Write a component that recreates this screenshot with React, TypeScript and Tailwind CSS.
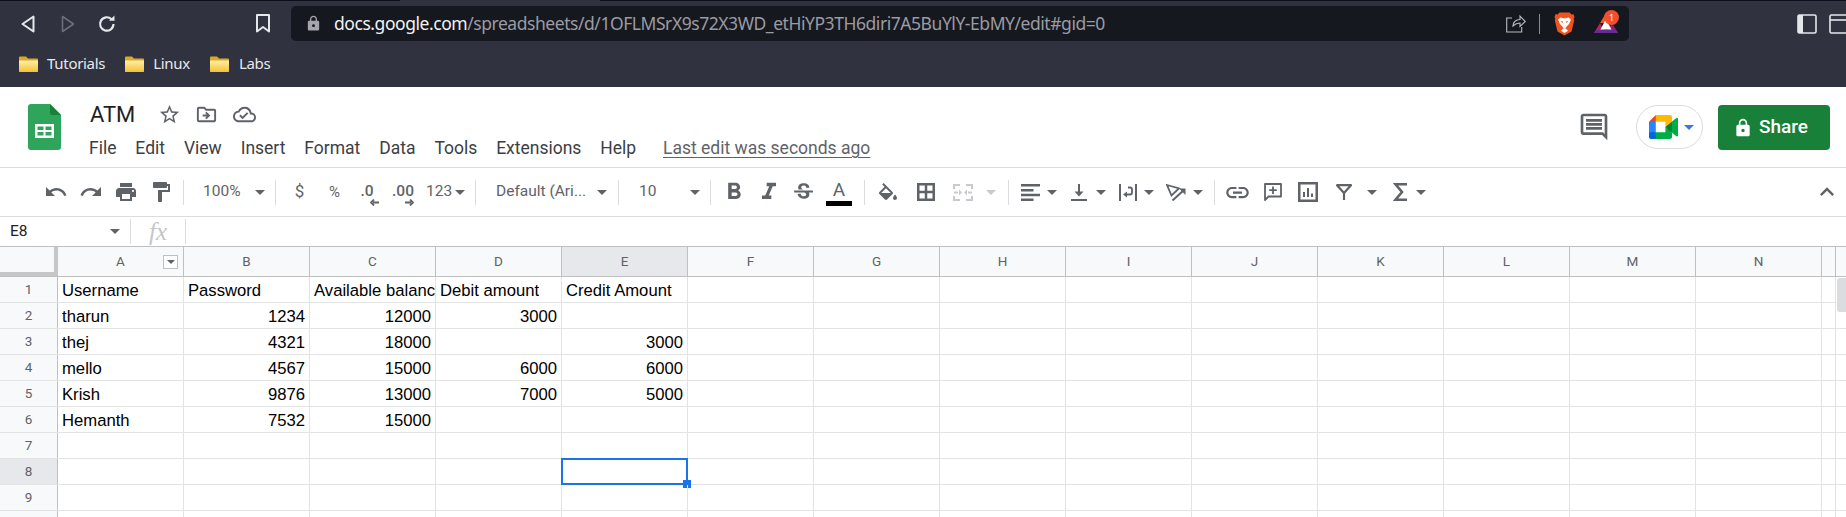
import React from "react";
import {
  MdExpandLess,
  MdFormatBold,
  MdFormatItalic,
  MdFormatPaint,
  MdLink,
  MdLock,
  MdOutlineCloudDone,
  MdOutlineComment,
  MdOutlineDriveFileMove,
  MdPrint,
  MdRedo,
  MdStarBorder,
  MdStrikethroughS,
  MdUndo,
} from "react-icons/md";

const COLUMNS = ["A", "B", "C", "D", "E", "F", "G", "H", "I", "J", "K", "L", "M", "N"];

const ROWS: string[][] = [
  ["Username", "Password", "Available balance", "Debit amount", "Credit Amount"],
  ["tharun", "1234", "12000", "3000", ""],
  ["thej", "4321", "18000", "", "3000"],
  ["mello", "4567", "15000", "6000", "6000"],
  ["Krish", "9876", "13000", "7000", "5000"],
  ["Hemanth", "7532", "15000", "", ""],
  ["", "", "", "", ""],
  ["", "", "", "", ""],
  ["", "", "", "", ""],
  ["", "", "", "", ""],
];

const MENU = ["File", "Edit", "View", "Insert", "Format", "Data", "Tools", "Extensions", "Help"];

const Caret = ({ className = "" }: { className?: string }) => (
  <svg width="10" height="5" viewBox="0 0 10 5" className={className}>
    <path d="M0 0h10L5 5z" fill="currentColor" />
  </svg>
);

const Sep = ({ className = "" }: { className?: string }) => (
  <div className={`h-[25px] w-px shrink-0 bg-[#dadce0] ${className}`} />
);

const Slot = ({ className = "w-[35px]", children }: { className?: string; children?: React.ReactNode }) => (
  <div className={`flex shrink-0 items-center justify-center ${className}`}>{children}</div>
);

const Folder = () => (
  <svg width="19" height="17" viewBox="0 0 19 17">
    <defs>
      <linearGradient id="folderFill" x1="0" y1="0" x2="0" y2="1">
        <stop offset="0" stopColor="#fff0a8" />
        <stop offset="1" stopColor="#f5c034" />
      </linearGradient>
    </defs>
    <path d="M1 1.5h6l2 2h9a1 1 0 0 1 1 1V16a1 1 0 0 1-1 1H1a1 1 0 0 1-1-1V2.5a1 1 0 0 1 1-1z" fill="#dba827" />
    <path d="M0 5.5h19V16a1 1 0 0 1-1 1H1a1 1 0 0 1-1-1z" fill="url(#folderFill)" />
  </svg>
);

const SheetsLogo = () => (
  <svg width="33" height="46" viewBox="0 0 33 46">
    <path d="M3 0h19l11 11v32a3 3 0 0 1-3 3H3a3 3 0 0 1-3-3V3a3 3 0 0 1 3-3z" fill="#2ea55a" />
    <path d="M22 0l11 11H24a2 2 0 0 1-2-2z" fill="#188038" />
    <path d="M7 20h19v14H7z" fill="#fff" />
    <path d="M9.5 22.5h6v3.5h-6zM17.5 22.5h6v3.5h-6zM9.5 28h6v3.5h-6zM17.5 28h6v3.5h-6z" fill="#2ea55a" />
  </svg>
);

const MeetLogo = () => (
  <svg width="29" height="24" viewBox="0 0 87.5 72">
    <path fill="#00832d" d="M49.5 36l8.53 9.75 11.47 7.33 2-17.02-2-16.64-11.69 6.44z" />
    <path fill="#0066da" d="M0 51.5V66c0 3.315 2.685 6 6 6h14.5l3-10.96-3-9.54-9.95-3z" />
    <path fill="#e94235" d="M20.5 0L0 20.5l10.55 3 9.95-3 2.95-9.41z" />
    <path fill="#2684fc" d="M20.5 20.5H0v31h20.5z" />
    <path
      fill="#00ac47"
      d="M82.6 8.68L69.5 19.42v33.66l13.16 10.79c1.97 1.54 4.85.135 4.85-2.37V11c0-2.535-2.945-3.925-4.91-2.32zM49.5 36v15.5h-29V72h43c3.315 0 6-2.685 6-6V53.08z"
    />
    <path fill="#ffba00" d="M63.5 0h-43v20.5h29V36l20-16.57V6c0-3.315-2.685-6-6-6z" />
  </svg>
);

const BraveLogo = () => (
  <svg width="21" height="24" viewBox="0 0 21 24">
    <path d="M5.500 0.500h10l2 2 2-.3 1 3-.8 1.300.5 1.800-2.700 11.200-7 4-7-4L.8 8.300l.5-1.800L.5 5.200l1-3 2 .3z" fill="#f1531f" />
    <path d="M10.500 21l-3.500-2.300 2.200-2.200h2.600l2.200 2.200z" fill="#fff" />
    <path d="M4 7.500l2.500-2 2.500.8h3l2.500-.8 2.500 2-2 4.500-2.500 2.800L10.500 17l-2-2.200L6 12z" fill="#fff" />
    <path d="M6.500 9l2.700.5-.7 1.500zM14.500 9l-2.700.5.7 1.500z" fill="#f1531f" />
  </svg>
);

const BatLogo = () => (
  <div className="relative h-[24px] w-[24px]">
    <svg width="24" height="20" viewBox="0 0 24 20" className="mt-[3px]">
      <path d="M12 0l6 10H6z" fill="#f05a24" />
      <path d="M6 10L0 20h12l-3-5z" fill="#b5245f" />
      <path d="M18 10l6 10H12l3-5z" fill="#8e1f73" />
      <path d="M0 20l2-3h20l2 3z" fill="#662d91" />
      <path d="M12 6l5.500 10.500h-11z" fill="#fff" />
    </svg>
    <div className="absolute -top-[3px] left-[10px] flex h-[15px] w-[15px] items-center justify-center rounded-full bg-[#f1502f] font-['Noto_Sans',sans-serif] text-[9px] leading-none text-white">
      1
    </div>
  </div>
);

const ChromeBar = () => (
  <div className="h-[87px] shrink-0 bg-[#30323f] font-['Noto_Sans',sans-serif]">
    <div className="flex h-px">
      <div className="w-[400px] bg-[#0c0e1c]" />
      <div className="w-[200px]" />
      <div className="flex-1 bg-[#0c0e1c]" />
    </div>
    <div className="flex h-[45px] items-center">
      <Slot className="ml-[12px] w-[32px] text-[#e6e7ea]">
        <svg width="14" height="18" viewBox="0 0 14 18">
          <path d="M12.500 1.500v15L1.500 9z" fill="none" stroke="currentColor" strokeWidth="2" strokeLinejoin="round" />
        </svg>
      </Slot>
      <Slot className="ml-[8px] w-[32px] text-[#6b6d78]">
        <svg width="14" height="18" viewBox="0 0 14 18">
          <path d="M1.500 1.500v15l11-7.500z" fill="none" stroke="currentColor" strokeWidth="1.600" strokeLinejoin="round" />
        </svg>
      </Slot>
      <Slot className="ml-[7px] w-[32px] text-[#e6e7ea]">
        <svg width="20" height="20" viewBox="0 0 20 20">
          <path d="M16.500 10a6.700 6.700 0 1 1-2-4.800" fill="none" stroke="currentColor" strokeWidth="2.200" />
          <path d="M12 6.800h5.500V1.500z" fill="currentColor" />
        </svg>
      </Slot>
      <Slot className="ml-[124px] w-[32px] text-[#e6e7ea]">
        <svg width="16" height="19" viewBox="0 0 16 19">
          <path d="M2 1h12v16.500l-6-4.500-6 4.500z" fill="none" stroke="currentColor" strokeWidth="2" strokeLinejoin="round" />
        </svg>
      </Slot>
      <div className="ml-[12px] flex h-[35px] w-[1338px] shrink-0 items-center rounded-[5px] bg-[#16181f]">
        <MdLock className="ml-[14px] text-[#a5a6ad]" size={17} />
        <div className="ml-[12px] text-[17.500px] leading-none tracking-[-0.45px] whitespace-nowrap">
          <span className="text-[#f1f2f4]">docs.google.com</span>
          <span className="text-[#9a9ba3]">/spreadsheets/d/1OFLMSrX9s72X3WD_etHiYP3TH6diri7A5BuYlY-EbMY/edit#gid=0</span>
        </div>
        <svg width="20" height="19" viewBox="0 0 20 19" className="ml-auto text-[#b9bac0]">
          <path
            d="M6 4H.7v14h15v-5M7 12c0-4 3-6.500 7-6.500V2l5.300 5.500L14 12.500V9c-3 0-5 1-7 3z"
            fill="none"
            stroke="currentColor"
            strokeWidth="1.100"
          />
        </svg>
        <div className="ml-[13px] h-[20px] w-px bg-[#8a8b92]" />
        <div className="ml-[14px]">
          <BraveLogo />
        </div>
        <div className="mr-[11px] ml-[19px]">
          <BatLogo />
        </div>
      </div>
      <svg width="20" height="20" viewBox="0 0 20 20" className="ml-[168px] shrink-0 text-[#e6e7ea]">
        <rect x="1" y="1" width="18" height="18" rx="1.500" fill="none" stroke="currentColor" strokeWidth="1.600" />
        <rect x="1" y="1" width="5" height="18" fill="currentColor" />
      </svg>
      <svg width="18" height="20" viewBox="0 0 18 20" className="ml-[12px] shrink-0 text-[#e6e7ea]">
        <rect x="1" y="1" width="18" height="18" rx="1.500" fill="none" stroke="currentColor" strokeWidth="1.600" />
        <path d="M1 6h17" stroke="currentColor" strokeWidth="1.600" />
      </svg>
    </div>
    <div className="flex h-[34px] items-center text-[15px] tracking-[-0.3px] text-[#e8e9ec]">
      <div className="ml-[19px]">
        <Folder />
      </div>
      <span className="ml-[9px]">Tutorials</span>
      <div className="ml-[20px]">
        <Folder />
      </div>
      <span className="ml-[9px]">Linux</span>
      <div className="ml-[20px]">
        <Folder />
      </div>
      <span className="ml-[10px]">Labs</span>
    </div>
  </div>
);

const DocHeader = () => (
  <div className="flex h-[81px] shrink-0 border-b border-[#dadce0] bg-white font-['Roboto',sans-serif]">
    <div className="ml-[28px] pt-[17px]">
      <SheetsLogo />
    </div>
    <div className="ml-[28px] flex flex-col">
      <div className="flex h-[40px] items-center pt-[14px]">
        <span className="w-[65px] pl-[1px] text-[22px] text-[#1f1f1f]">ATM</span>
        <MdStarBorder className="ml-[4px] text-[#5f6368]" size={23} />
        <MdOutlineDriveFileMove className="ml-[14px] text-[#5f6368]" size={23} />
        <MdOutlineCloudDone className="ml-[15px] text-[#5f6368]" size={23} />
      </div>
      <div className="mt-[9px] flex items-center gap-[18.900px] text-[17.500px] leading-[24px] text-[#3c4043]">
        {MENU.map((item) => (
          <span key={item}>{item}</span>
        ))}
        <span className="ml-[8px] text-[#5f6368] underline underline-offset-[3px]">Last edit was seconds ago</span>
      </div>
    </div>
    <div className="mr-[16px] ml-auto flex items-start pt-[18px]">
      <MdOutlineComment className="mt-[6px] mr-[26px] text-[#5f6368]" size={32} />
      <div className="mr-[15px] flex h-[44px] w-[67px] items-center rounded-full border border-[#dadce0] pl-[12px]">
        <MeetLogo />
        <Caret className="ml-[6px] text-[#3b78d8]" />
      </div>
      <div className="flex h-[45px] w-[112px] items-center rounded-[4px] bg-[#188038] pl-[15px] text-[19px] font-medium text-white">
        <MdLock size={20} />
        <span className="ml-[6px]">Share</span>
      </div>
    </div>
  </div>
);

const Toolbar = () => (
  <div className="flex h-[49px] shrink-0 items-center border-b border-[#dadce0] bg-white pl-[38px] font-['Roboto',sans-serif] text-[15.500px] text-[#5f6368]">
    <Slot><MdUndo size={24} /></Slot>
    <Slot><MdRedo size={24} /></Slot>
    <Slot><MdPrint size={24} /></Slot>
    <Slot><MdFormatPaint size={24} /></Slot>
    <Sep className="ml-[5px]" />
    <div className="flex w-[91px] shrink-0 items-center justify-between pr-[10px] pl-[19px]">
      <span>100%</span>
      <Caret />
    </div>
    <Sep />
    <Slot className="ml-[6px] w-[35px] text-[17px]">$</Slot>
    <Slot className="w-[35px] text-[15px]">%</Slot>
    <Slot className="relative w-[30px] font-medium">
      <span className="-mt-[1px]">.0</span>
      <svg width="9" height="7" viewBox="0 0 9 7" className="absolute top-[18px] left-[18px]">
        <path d="M9 3.500H3M4 .5L1 3.500l3 3" fill="none" stroke="currentColor" strokeWidth="1.800" />
      </svg>
    </Slot>
    <Slot className="relative w-[42px] font-medium">
      <span className="-mt-[1px]">.00</span>
      <svg width="9" height="7" viewBox="0 0 9 7" className="absolute top-[18px] left-[23px]">
        <path d="M0 3.500h6M5 .5l3 3-3 3" fill="none" stroke="currentColor" strokeWidth="1.800" />
      </svg>
    </Slot>
    <div className="flex w-[51px] shrink-0 items-center pl-[2px]">
      <span>123</span>
      <Caret className="ml-[3px]" />
    </div>
    <Sep />
    <div className="flex w-[142px] shrink-0 items-center justify-between pr-[11px] pl-[20px]">
      <span>Default (Ari...</span>
      <Caret />
    </div>
    <Sep />
    <div className="flex w-[91px] shrink-0 items-center justify-between pr-[10px] pl-[20px]">
      <span>10</span>
      <Caret />
    </div>
    <Sep />
    <Slot className="ml-[5px] w-[35px]"><MdFormatBold size={28} /></Slot>
    <Slot><MdFormatItalic size={28} /></Slot>
    <Slot><MdStrikethroughS size={25} /></Slot>
    <div className="flex w-[36px] shrink-0 flex-col items-center">
      <span className="text-[19px] leading-[22px]">A</span>
      <div className="h-[5px] w-[26px] bg-black" />
    </div>
    <Sep className="ml-[7px]" />
    <Slot className="ml-[5px] w-[35px]">
      <svg width="20" height="18" viewBox="2 0 20 18" fill="currentColor">
        <path d="M16.560 8.940L7.620 0 6.210 1.410l2.380 2.380-5.150 5.150c-.59.59-.59 1.540 0 2.120l5.500 5.500c.29.29.68.44 1.060.44s.77-.15 1.060-.44l5.500-5.500c.59-.58.59-1.530 0-2.120zM5.210 10L10 5.210 14.790 10H5.210zM19 11.500s-2 2.170-2 3.500c0 1.100.9 2 2 2s2-.9 2-2c0-1.330-2-3.500-2-3.500z" />
      </svg>
    </Slot>
    <Slot className="w-[42px]">
      <svg width="18" height="18" viewBox="0 0 18 18" fill="none" stroke="currentColor" strokeWidth="2.500">
        <path d="M1.250 1.250h15.500v15.500H1.250zM9 1v16M1 9h16" />
      </svg>
    </Slot>
    <Slot className="w-[32px] text-[#c8cacd]">
      <svg width="20" height="17" viewBox="0 0 20 17" fill="none" stroke="currentColor" strokeWidth="2">
        <path d="M1 5V1h6M13 1h6v4M1 12v4h6M13 16h6v-4" />
        <path d="M1 8.500h4M19 8.500h-4" />
        <path d="M6 5.500l3 3-3 3zM14 5.500l-3 3 3 3z" fill="currentColor" strokeWidth="0" />
      </svg>
    </Slot>
    <Slot className="w-[24px] text-[#c8cacd]"><Caret /></Slot>
    <Sep className="ml-[5px]" />
    <Slot className="ml-[4px] w-[34px]">
      <svg width="19" height="17" viewBox="0 0 19 17" fill="none" stroke="currentColor" strokeWidth="2.400">
        <path d="M0 1.200h19M0 6.200h12.500M0 11h19M0 15.800h12.500" />
      </svg>
    </Slot>
    <Slot className="w-[10px]"><Caret /></Slot>
    <Slot className="ml-[5px] w-[34px]">
      <svg width="16" height="17" viewBox="0 0 16 17" fill="none" stroke="currentColor" strokeWidth="2">
        <path d="M0 16h16M8 0v10" />
        <path d="M3.500 7.500h9L8 12.500z" fill="currentColor" strokeWidth="0" />
      </svg>
    </Slot>
    <Slot className="w-[10px]"><Caret /></Slot>
    <Slot className="ml-[5px] w-[33px]">
      <svg width="18" height="17" viewBox="0 0 18 17" fill="none" stroke="currentColor" strokeWidth="2">
        <path d="M1 0v17M17 0v17" />
        <path d="M9 3.500h2a2 2 0 0 1 2 2v3a2 2 0 0 1-2 2H7" strokeWidth="1.800" />
        <path d="M8 7.500L4 10.500l4 3z" fill="currentColor" strokeWidth="0" />
      </svg>
    </Slot>
    <Slot className="w-[10px]"><Caret /></Slot>
    <Slot className="ml-[5px] w-[34px]">
      <svg width="20" height="17" viewBox="0 0 20 17" fill="none" stroke="currentColor" strokeWidth="1.800">
        <path d="M1 1l12 3.500-7.500 7z" />
        <path d="M6.500 16.500L18 6" strokeWidth="2" />
        <path d="M13 4.500h6.500V11z" fill="currentColor" strokeWidth="0" />
      </svg>
    </Slot>
    <Slot className="w-[10px]"><Caret /></Slot>
    <Sep className="ml-[11px]" />
    <Slot className="ml-[5px] w-[35px]"><MdLink size={27} /></Slot>
    <Slot>
      <svg width="18" height="19" viewBox="0 0 18 19" fill="none" stroke="currentColor" strokeWidth="1.800">
        <path d="M1 1h16v12.500H4.500L1 17z" strokeLinejoin="round" />
        <path d="M9 3.500v7.500M5.200 7.200h7.600" />
      </svg>
    </Slot>
    <Slot className="w-[36px]">
      <svg width="20" height="20" viewBox="0 0 20 20" fill="none" stroke="currentColor">
        <path d="M1.250 1.250h17.500v17.500H1.250z" strokeWidth="2.500" />
        <path d="M6 10v5M10 6v9M14 11.500V15" strokeWidth="2" />
      </svg>
    </Slot>
    <Slot className="w-[36px]">
      <svg width="16" height="16" viewBox="0 0 16 16" fill="none" stroke="currentColor" strokeWidth="2.200">
        <path d="M1 1.200h14L8 9 1 1.200zM8 8.500V16" strokeLinejoin="round" />
      </svg>
    </Slot>
    <Slot className="ml-[5px] w-[10px]"><Caret /></Slot>
    <Slot className="ml-[6px] w-[33px]">
      <svg width="14" height="18" viewBox="0 0 14 18" fill="none" stroke="currentColor" strokeWidth="2.600">
        <path d="M14 1.300H2.500L9 9l-6.500 7.700H14" />
      </svg>
    </Slot>
    <Slot className="w-[10px]"><Caret /></Slot>
    <div className="mr-[5px] ml-auto">
      <MdExpandLess size={28} />
    </div>
  </div>
);

const FormulaBar = () => (
  <div className="flex h-[29px] shrink-0 items-center bg-white font-['Roboto',sans-serif] text-[15.500px] text-[#202124]">
    <span className="ml-[10px] w-[100px]">E8</span>
    <Caret className="text-[#5f6368]" />
    <Sep className="ml-[10px]" />
    <span className="w-[54px] text-center font-['Liberation_Serif',serif] text-[25px] leading-none text-[#c4c6c9] italic">fx</span>
    <Sep />
  </div>
);

const HeaderRow = () => (
  <div className="flex h-[31px] shrink-0 border-y border-[#c0c0c0] bg-[#f8f9fa] font-['Roboto',sans-serif] text-[13.500px] text-[#5f6368]">
    <div className="h-[29px] w-[58px] shrink-0 border-r-4 border-b-4 border-[#c4c6c8]" />
    {COLUMNS.map((col) => (
      <div
        key={col}
        className={`relative flex w-[126px] shrink-0 items-center justify-center border-r border-[#c0c0c0] ${
          col === "E" ? "bg-[#e6e8eb]" : ""
        }`}
      >
        {col}
        {col === "A" && (
          <div className="absolute top-[8px] right-[5px] flex h-[14px] w-[15px] items-center justify-center border border-[#c0c0c0] bg-white">
            <Caret className="h-[4px] w-[8px]" />
          </div>
        )}
      </div>
    ))}
    <div className="w-[14px] shrink-0 border-r border-[#c0c0c0]" />
  </div>
);

const GridRow = ({ cells, index }: { cells: string[]; index: number }) => {
  const rowNum = index + 1;
  return (
    <div className="flex h-[26px] shrink-0 border-b border-[#e2e3e3]">
      <div
        className={`flex w-[58px] shrink-0 items-center justify-center border-r border-[#c0c0c0] font-['Roboto',sans-serif] text-[13.500px] text-[#5f6368] ${
          rowNum === 8 ? "bg-[#e6e8eb]" : "bg-[#f8f9fa]"
        }`}
      >
        {rowNum < 10 ? rowNum : ""}
      </div>
      {COLUMNS.map((col, i) => {
        const value = cells[i] ?? "";
        const numeric = /^\d+$/.test(value);
        return (
          <div
            key={col}
            className={`relative flex w-[126px] shrink-0 items-center border-r border-[#e2e3e3] pt-[1px] font-['Liberation_Sans',Arial,sans-serif] text-[16.670px] text-black ${
              numeric ? "justify-end pr-[4px]" : "justify-start pl-[4px]"
            }`}
          >
            <span className="overflow-hidden whitespace-nowrap">{value}</span>
            {col === "E" && rowNum === 8 && (
              <div className="absolute -top-px -right-px -bottom-px -left-px border-2 border-[#1a73e8]">
                <div className="absolute -right-[5px] -bottom-[5px] h-[8px] w-[8px] bg-[#1a73e8]" />
              </div>
            )}
          </div>
        );
      })}
      <div className="w-[14px] shrink-0 border-r border-[#e2e3e3]" />
    </div>
  );
};

const App = () => (
  <div className="relative flex h-[517px] w-[1846px] flex-col overflow-hidden bg-white">
    <ChromeBar />
    <DocHeader />
    <Toolbar />
    <FormulaBar />
    <HeaderRow />
    {ROWS.map((cells, i) => (
      <GridRow key={i} cells={cells} index={i} />
    ))}
    <div className="absolute top-[278px] right-0 h-[34px] w-[9px] rounded-l-[3px] bg-[#dadce0]" />
  </div>
);

export default App;
